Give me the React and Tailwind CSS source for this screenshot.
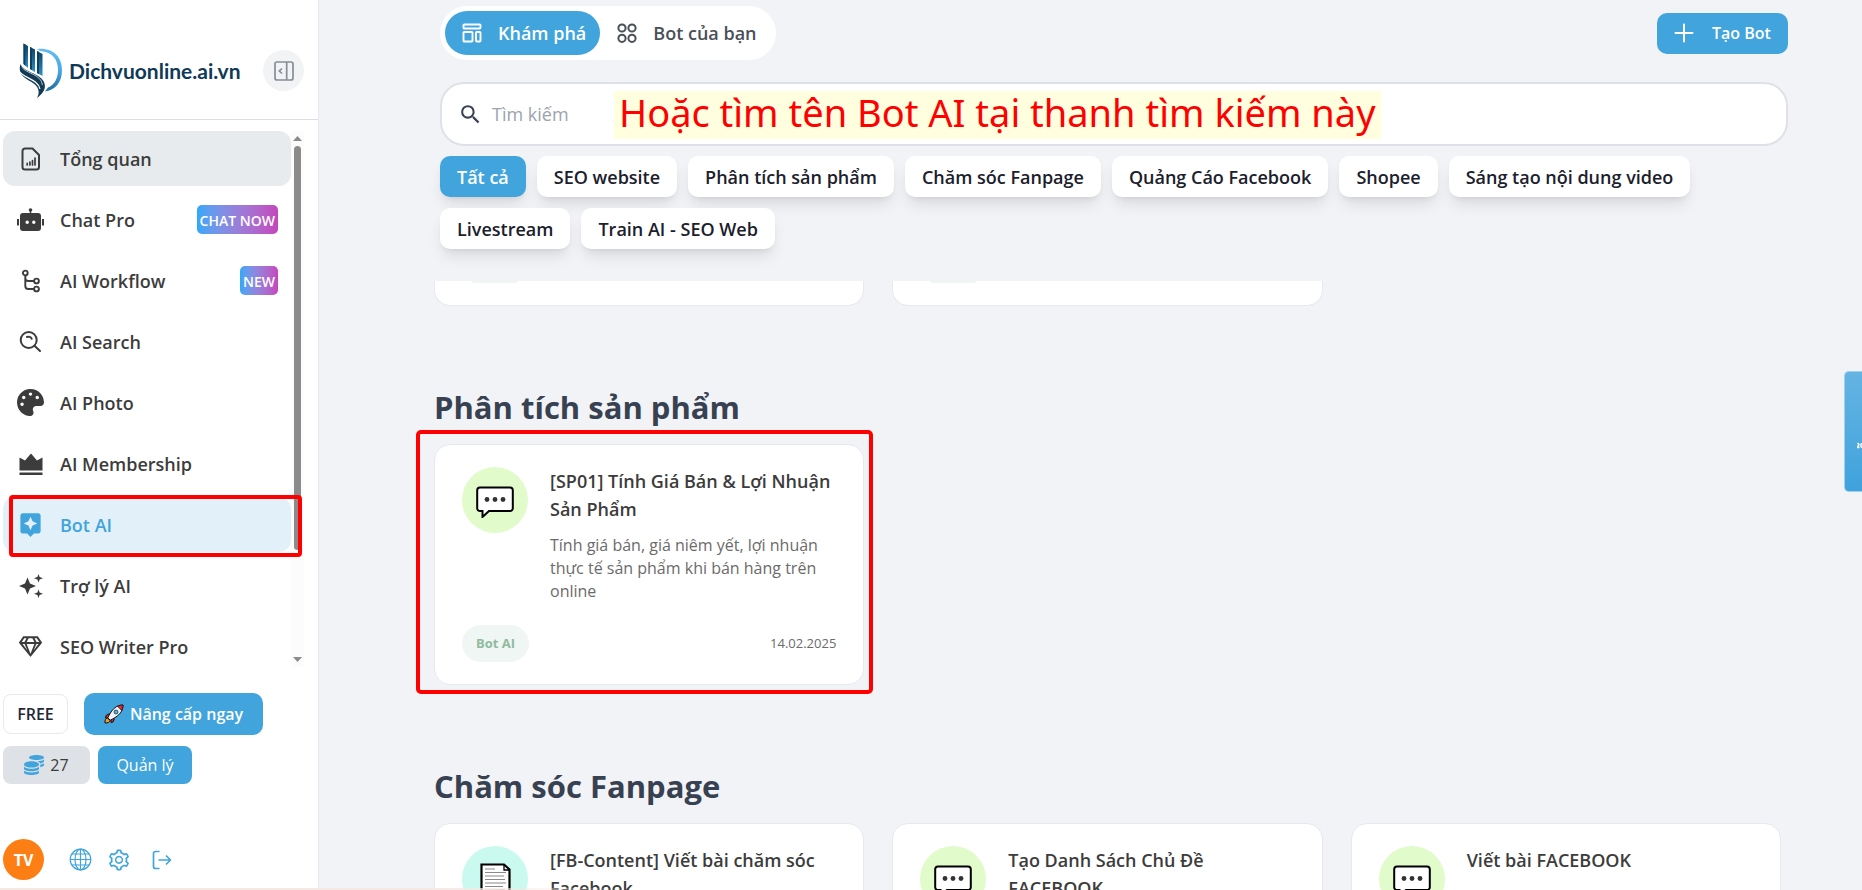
import React from "react";
import { FaPalette, FaRegGem, FaCoins } from "react-icons/fa";
import { MdAssistant, MdSearch } from "react-icons/md";
import { AiOutlineSetting } from "react-icons/ai";

function LogoMark() {
  return (
    <svg width="46" height="58" viewBox="0 0 46 58" aria-hidden="true">
      <defs>
        <linearGradient id="bar" x1="0" y1="0" x2="0" y2="1">
          <stop offset="0" stopColor="#0d4263" />
          <stop offset="1" stopColor="#2f8fc9" />
        </linearGradient>
        <linearGradient id="ring" x1="0" y1="0" x2="0" y2="1">
          <stop offset="0" stopColor="#62bdf2" />
          <stop offset="0.5" stopColor="#4aa9e6" />
          <stop offset="1" stopColor="#1d6d9e" />
        </linearGradient>
      </defs>
      <path d="M19 7C34 5 44 14 44 28S36 48 27 49.500L30 45.500C36 43 40 37 40 28C40 18 35 10 22 9Z" fill="url(#ring)" />
      <path d="M5.500 22V1.500L10 4V26Z" fill="url(#bar)" />
      <path d="M5.500 1.500L7.500 2.600V24L5.500 22Z" fill="#0d4263" />
      <path d="M12 5L17 7.500V30L12 27Z" fill="url(#bar)" />
      <path d="M12 5L14 6V28L12 27Z" fill="#0d4263" />
      <path d="M19 9L24.500 12V34L19 31Z" fill="url(#bar)" />
      <path d="M19 9L21 10V32L19 31Z" fill="#0d4263" />
      <path d="M2.500 22C5 30 22 31 26 40C29 47 24 52 19 56C22 50 21 45 15 41C8 37-1 33 2.500 22Z" fill="#123a55" />
      <path d="M1 29C5 36 20 37 22 47" fill="none" stroke="#ffffff" strokeWidth="1.200" />
      <path d="M3.500 25C9 32 23 32 24.500 43" fill="none" stroke="#d7e4ec" strokeWidth="0.800" />
    </svg>
  );
}

function ReportIcon() {
  return (
    <svg width="20" height="24" viewBox="0 0 20 24" fill="none" stroke="currentColor" strokeWidth="2" strokeLinecap="round" aria-hidden="true">
      <path d="M4 1.500H11.500L18 8V20A2.500 2.500 0 0 1 15.500 22.500H4A2.500 2.500 0 0 1 1.500 20V4A2.500 2.500 0 0 1 4 1.500Z" />
      <path d="M6.200 18V16.300M8.900 18V15M11.500 18V13.500M14 18V11" strokeWidth="1.700" />
    </svg>
  );
}

function RobotIcon() {
  return (
    <svg width="27" height="24" viewBox="0 0 27 24" fill="currentColor" aria-hidden="true">
      <circle cx="13.500" cy="2" r="1.800" />
      <path d="M12.800 2h1.400v4h-1.400z" />
      <path fillRule="evenodd" d="M6 5h15a3 3 0 0 1 3 3v12a3 3 0 0 1-3 3H6a3 3 0 0 1-3-3V8a3 3 0 0 1 3-3Zm4.200 7.600a1.700 1.700 0 1 0 0 3.400 1.700 1.700 0 0 0 0-3.400Zm6.600 0a1.700 1.700 0 1 0 0 3.400 1.700 1.700 0 0 0 0-3.400Z" />
      <path d="M0 11h2v6.500H0zM25 11h2v6.500h-2z" />
    </svg>
  );
}

function WorkflowIcon() {
  return (
    <svg width="20" height="24" viewBox="0 0 20 24" fill="none" stroke="currentColor" strokeWidth="1.900" aria-hidden="true">
      <circle cx="4.300" cy="4" r="2.400" />
      <circle cx="15.500" cy="12" r="2.400" />
      <circle cx="15.500" cy="20" r="2.400" />
      <path d="M4.300 6.400V17A3 3 0 0 0 7.300 20H13.100M4.300 9A3 3 0 0 0 7.300 12H13.100" />
    </svg>
  );
}

function SearchNavIcon() {
  return (
    <svg width="24" height="24" viewBox="0 0 24 24" fill="none" stroke="currentColor" strokeWidth="2" strokeLinecap="round" aria-hidden="true">
      <circle cx="9.700" cy="10" r="8" />
      <path d="M15.500 15.800L21 21M8 7C10 6.100 12 7.100 12.700 8.800" />
    </svg>
  );
}

function CrownIcon() {
  return (
    <svg width="24" height="24" viewBox="0 0 24 24" fill="currentColor" aria-hidden="true">
      <path d="M0.500 5.500L6 8.500L12 1.500L18 8.500L23.500 5.500V18.500H0.500ZM0.500 20.500H23.500V23H0.500Z" />
    </svg>
  );
}

function SparkleIcon() {
  return (
    <svg width="24" height="24" viewBox="0 0 24 24" fill="currentColor" aria-hidden="true">
      <path d="M8.500 3.500L11 9.500L17 12L11 14.500L8.500 20.500L6 14.500L0 12L6 9.500Z" />
      <path d="M19.500 0L20.600 3.100L24 4.300L20.600 5.500L19.500 8.600L18.400 5.500L15 4.300L18.400 3.100Z" />
      <path d="M19.500 15.400L20.600 18.500L24 19.700L20.600 20.900L19.500 24L18.400 20.900L15 19.700L18.400 18.500Z" />
    </svg>
  );
}

function CollapseIcon() {
  return (
    <svg width="20" height="20" viewBox="0 0 20 20" fill="none" stroke="currentColor" strokeWidth="1.700" aria-hidden="true">
      <rect x="1" y="1" width="18" height="18" rx="2" />
      <path d="M12.700 1V19M8 7.500L5.300 10L8 12.500" />
    </svg>
  );
}

function RocketIcon() {
  return (
    <svg width="20" height="20" viewBox="0 0 20 20" aria-hidden="true">
      <path d="M5.500 9.500L2 11.500L1.500 14L5.500 13.500M10.500 14.500L9 18L7 18.500L7 14.500" fill="#e9252f" stroke="#111" strokeWidth="1" />
      <path d="M1 19C0.800 16 1.500 14.500 3.500 14L6 16.500C5.500 18.500 4 19 1 19Z" fill="#ff9a1f" stroke="#111" strokeWidth="1" />
      <path d="M19 1C13 1 8.500 4.500 5 11.500L3.800 13.800L6.200 16.200L8.500 15C15.500 11.500 19 7 19 1Z" fill="#eef4f8" stroke="#111" strokeWidth="1" />
      <path d="M19 1C17 1 15 1.500 13.500 2.300L17.700 6.500C18.500 5 19 3 19 1Z" fill="#e9252f" stroke="#111" strokeWidth="0.700" />
      <circle cx="12" cy="8" r="2" fill="#47b3ec" stroke="#222" strokeWidth="0.700" />
    </svg>
  );
}

function GlobeIcon() {
  return (
    <svg width="23" height="23" viewBox="0 0 23 23" fill="none" stroke="currentColor" strokeWidth="1.200" aria-hidden="true">
      <circle cx="11.500" cy="11.500" r="10.300" />
      <ellipse cx="11.500" cy="11.500" rx="5.500" ry="10.300" />
      <path d="M11.500 1.200V21.800M1.200 11.500H21.800M2.800 6H20.200M2.800 17H20.200" />
    </svg>
  );
}

function LogoutIcon() {
  return (
    <svg width="20" height="20" viewBox="0 0 20 20" fill="none" stroke="currentColor" strokeWidth="1.700" strokeLinejoin="round" aria-hidden="true">
      <path d="M7.500 1.500H3.500A2 2 0 0 0 1.500 3.500V16.500A2 2 0 0 0 3.500 18.500H7.500M6.500 10H18.500M14 5.500L18.500 10L14 14.500" />
    </svg>
  );
}

function ExploreIcon() {
  return (
    <svg width="20" height="20" viewBox="0 0 20 20" fill="none" stroke="currentColor" strokeWidth="1.900" aria-hidden="true">
      <rect x="1.500" y="1.500" width="17" height="4" rx="0.800" />
      <rect x="1.500" y="9" width="9" height="9.500" rx="0.800" />
      <rect x="14" y="9" width="4.500" height="9.500" rx="0.800" />
    </svg>
  );
}

function CirclesIcon() {
  return (
    <svg width="20" height="20" viewBox="0 0 20 20" fill="none" stroke="currentColor" strokeWidth="2" aria-hidden="true">
      <circle cx="5" cy="5" r="3.600" />
      <circle cx="15" cy="5" r="3.600" />
      <circle cx="5" cy="15.300" r="3.600" />
      <circle cx="15" cy="15.300" r="3.600" />
    </svg>
  );
}

function PlusIcon() {
  return (
    <svg width="20" height="20" viewBox="0 0 20 20" fill="none" stroke="currentColor" strokeWidth="2" strokeLinecap="round" aria-hidden="true">
      <path d="M10 1.500V18.500M1.500 10H18.500" />
    </svg>
  );
}

function BubbleIcon() {
  return (
    <svg width="38" height="36" viewBox="0 -3 38 36" aria-hidden="true">
      <path d="M4 2.500H34A2.800 2.800 0 0 1 36.800 5.300V23.200A2.800 2.800 0 0 1 34 26H13L6.500 32V26H4A2.800 2.800 0 0 1 1.200 23.200V5.300A2.800 2.800 0 0 1 4 2.500Z" fill="#fff" stroke="#000" strokeWidth="2" />
      <circle cx="11" cy="14.500" r="2.400" fill="#333" />
      <circle cx="19" cy="14.500" r="2.400" fill="#333" />
      <circle cx="27" cy="14.500" r="2.400" fill="#333" />
    </svg>
  );
}

function PageIcon() {
  return (
    <svg width="31" height="36" viewBox="0 0 31 36" aria-hidden="true">
      <path d="M1.500 3.500H24L29.500 8.500V35H1.500Z" fill="#fff" stroke="#000" strokeWidth="2.200" />
      <path d="M24 3.500V9H29.500" fill="none" stroke="#000" strokeWidth="1.300" />
      <path d="M5 8H15M5 11.500H26M5 15H24M5 18.500H25M5 22H26M5 25.500H23M5 29H25" stroke="#8a8a8a" strokeWidth="1.200" />
    </svg>
  );
}

const NAV = [
  { label: "Tổng quan", icon: <ReportIcon />, hovered: true },
  { label: "Chat Pro", icon: <RobotIcon />, badge: "CHAT NOW" },
  { label: "AI Workflow", icon: <WorkflowIcon />, badge: "NEW" },
  { label: "AI Search", icon: <SearchNavIcon /> },
  { label: "AI Photo", icon: <FaPalette size={27} /> },
  { label: "AI Membership", icon: <CrownIcon /> },
  { label: "Bot AI", icon: <MdAssistant size={27} />, active: true },
  { label: "Trợ lý AI", icon: <SparkleIcon /> },
  { label: "SEO Writer Pro", icon: <FaRegGem size={23} /> },
];

const CATEGORIES = [
  "Tất cả",
  "SEO website",
  "Phân tích sản phẩm",
  "Chăm sóc Fanpage",
  "Quảng Cáo Facebook",
  "Shopee",
  "Sáng tạo nội dung video",
  "Livestream",
  "Train AI - SEO Web",
];

function NavItem({ item }) {
  const tone = item.active
    ? "bg-[#e2f0fa] text-[#41a4dd]"
    : item.hovered
      ? "bg-[#e8ebee] text-[#3c3c3c]"
      : "text-[#3c3c3c]";
  return (
    <li className="relative">
      <a href="#" className={`flex h-[55px] items-center gap-4 rounded-xl pr-[13px] pl-[14px] text-[18px] font-semibold ${tone}`}>
        <span className="flex w-[27px] shrink-0 justify-center">{item.icon}</span>
        <span className="grow pt-px whitespace-nowrap">{item.label}</span>
        {item.badge && (
          <span className="flex h-[29px] items-center rounded-[5px] bg-linear-to-r from-[#2da8f8] to-[#c445bd] px-[3px] pt-px text-[14px] font-semibold whitespace-nowrap text-white">
            {item.badge}
          </span>
        )}
      </a>
      {item.active && (
        <span className="pointer-events-none absolute -top-[2px] -right-[11px] bottom-[-5px] left-[6px] z-10 rounded-[4px] border-4 border-[#ff0000]" />
      )}
    </li>
  );
}

function Sidebar() {
  return (
    <aside className="flex w-[319px] shrink-0 flex-col border-r border-[#e5e9f0] bg-white">
      <div className="flex h-[120px] items-center border-b border-[#dcdee1] pt-[22px] pr-[14px] pl-[18px]">
        <a href="#" className="flex grow items-center gap-[5px] font-['Lato',sans-serif] text-[21px] font-bold whitespace-nowrap text-[#0f3a57]">
          <LogoMark />
          Dichvuonline.ai.vn
        </a>
        <button type="button" aria-label="Thu gọn" className="flex size-[41px] shrink-0 items-center justify-center rounded-full bg-[#f1f3f5] text-[#868e96]">
          <CollapseIcon />
        </button>
      </div>
      <nav className="mt-[11px] mr-[14px] ml-[3px] flex h-[536px] shrink-0">
        <ul className="flex grow flex-col gap-[6px]">
          {NAV.map((item) => (
            <NavItem key={item.label} item={item} />
          ))}
        </ul>
        <div className="flex w-[13px] flex-col items-center bg-[#fcfcfc] py-[5px]" aria-hidden="true">
          <svg width="9" height="5" viewBox="0 0 9 5" fill="#8b8b8b"><path d="M4.500 0L9 5H0Z" /></svg>
          <div className="mt-[5px] h-[404px] w-[7px] rounded-full bg-[#8b8b8b]" />
          <svg className="mt-auto" width="9" height="5" viewBox="0 0 9 5" fill="#8b8b8b"><path d="M4.500 5L9 0H0Z" /></svg>
        </div>
      </nav>
      <div className="mt-[26px] ml-[3px] flex items-center gap-4">
        <span className="flex h-10 w-[65px] items-center justify-center rounded-lg border border-[#e5e9f0] text-[16px] font-semibold text-[#1f2937]">FREE</span>
        <button type="button" className="flex h-[42px] w-[179px] items-center justify-center gap-[6px] rounded-[10px] bg-[#41a4dd] text-[16px] font-semibold whitespace-nowrap text-white">
          <RocketIcon />
          Nâng cấp ngay
        </button>
      </div>
      <div className="mt-[11px] ml-[3px] flex gap-2">
        <span className="flex h-[38px] w-[87px] items-center justify-center gap-[6px] rounded-lg bg-[#dee2e6] text-[16px] text-[#3c3c3c]">
          <FaCoins size={20} className="text-[#41a4dd]" />
          27
        </span>
        <button type="button" className="h-[38px] w-[94px] rounded-lg bg-[#41a4dd] text-[16px] text-white">Quản lý</button>
      </div>
      <div className="mt-auto mb-[10px] ml-[3px] flex items-center text-[#41a4dd]">
        <span className="flex size-[41px] items-center justify-center rounded-full bg-[#fd7e14] text-[16px] font-bold text-white">TV</span>
        <button type="button" aria-label="Ngôn ngữ" className="ml-[25px]"><GlobeIcon /></button>
        <button type="button" aria-label="Cài đặt" className="ml-[15px]"><AiOutlineSetting size={24} /></button>
        <button type="button" aria-label="Đăng xuất" className="ml-[21px]"><LogoutIcon /></button>
      </div>
    </aside>
  );
}

function BotCard({ title, text, date, page }) {
  return (
    <article className="flex h-[241px] flex-col rounded-[16px] border border-[#e5e9f0] bg-white px-[27px] pt-[22px] pb-[22px]">
      <div className="flex grow gap-[22px]">
        <div className={`flex size-[66px] shrink-0 items-center justify-center rounded-full ${page ? "bg-[#c9f9ef]" : "bg-[#e1fbcb]"}`}>
          {page ? <PageIcon /> : <BubbleIcon />}
        </div>
        <div>
          <h3 className="text-[18px] leading-[28px] font-semibold text-[#3c3c3c]">{title}</h3>
          <p className="mt-[11px] text-[16px] leading-[23px] text-[#6b6b6b]">{text}</p>
        </div>
      </div>
      {date && (
        <div className="flex items-center justify-between">
          <span className="flex h-[37px] items-center rounded-full bg-[#eff6f3] px-[14px] text-[13px] font-bold text-[#8fbb9d]">Bot AI</span>
          <time className="text-[13px] text-[#6b6b6b]">{date}</time>
        </div>
      )}
    </article>
  );
}

function ClippedCard() {
  return (
    <div className="h-[25px] rounded-b-[16px] border-x border-b border-[#e5e9f0] bg-white pl-[37px]">
      <div className="h-[2px] w-[46px] rounded-b-full bg-[#eff6f3]" />
    </div>
  );
}

export default function App() {
  return (
    <div className="relative flex h-screen overflow-hidden bg-[#f2f3f6] font-['Open_Sans','Noto_Sans',sans-serif]">
      <Sidebar />
      <main className="flex min-w-0 grow flex-col">
        <header className="flex flex-col pt-[6px] pr-[74px] pl-[121px]">
          <div className="flex items-center justify-between">
            <div className="flex items-center rounded-full bg-white p-[5px] text-[18px] font-semibold whitespace-nowrap">
              <button type="button" className="flex h-11 items-center gap-4 rounded-full bg-[#41a4dd] pr-[14px] pl-[17px] text-white">
                <ExploreIcon />
                Khám phá
              </button>
              <button type="button" className="flex h-11 items-center gap-4 pr-[14px] pl-[17px] text-[#495057]">
                <CirclesIcon />
                Bot của bạn
              </button>
            </div>
            <button type="button" className="flex h-[41px] w-[131px] items-center justify-center gap-[18px] rounded-[10px] bg-[#41a4dd] text-[16px] font-semibold whitespace-nowrap text-white">
              <PlusIcon />
              Tạo Bot
            </button>
          </div>
          <div className="relative mt-[22px] flex h-16 items-center gap-[9px] rounded-[24px] border-2 border-[#dee2e8] bg-white pl-4">
            <MdSearch size={25} className="text-[#374151]" />
            <input type="search" aria-label="Tìm kiếm" placeholder="Tìm kiếm" className="h-full min-w-0 grow bg-transparent pr-6 text-[18px] outline-none placeholder:text-[#9ca3af]" />
            <p className="pointer-events-none absolute top-[7px] left-[172px] flex h-12 items-center bg-[#ffffdf] px-[5px] pb-[6px] font-['Noto_Sans',sans-serif] text-[38px] leading-[42px] whitespace-nowrap text-[#ff0000]">
              Hoặc tìm tên Bot AI tại thanh tìm kiếm này
            </p>
          </div>
          <div className="mt-[10px] flex flex-wrap gap-[11px]">
            {CATEGORIES.map((name, i) => (
              <button
                key={name}
                type="button"
                className={`h-[41px] rounded-[10px] px-[17px] pt-px text-[18px] font-semibold whitespace-nowrap shadow-lg ${i === 0 ? "bg-[#41a4dd] text-white" : "bg-white text-[#1a202c]"}`}
              >
                {name}
              </button>
            ))}
          </div>
        </header>
        <div className="mt-8 min-h-0 grow overflow-hidden pr-[81px] pl-[115px]">
          <div className="grid grid-cols-3 gap-7">
            <ClippedCard />
            <ClippedCard />
          </div>
          <section className="mt-[77px]">
            <h2 className="text-[31px] leading-[48px] font-bold text-[#374151]">Phân tích sản phẩm</h2>
            <div className="mt-[13px] grid grid-cols-3 gap-7">
              <div className="relative">
                <BotCard title="[SP01] Tính Giá Bán & Lợi Nhuận Sản Phẩm" text="Tính giá bán, giá niêm yết, lợi nhuận thực tế sản phẩm khi bán hàng trên online" date="14.02.2025" />
                <span className="pointer-events-none absolute -top-[14px] -right-[9px] -bottom-[9px] -left-[18px] rounded-[5px] border-4 border-[#ff0000]" />
              </div>
            </div>
          </section>
          <section className="mt-[77px]">
            <h2 className="text-[31px] leading-[48px] font-bold text-[#374151]">Chăm sóc Fanpage</h2>
            <div className="mt-[13px] grid grid-cols-3 gap-7">
              <BotCard page title="[FB-Content] Viết bài chăm sóc Facebook" />
              <BotCard title="Tạo Danh Sách Chủ Đề FACEBOOK" />
              <BotCard title="Viết bài FACEBOOK" />
            </div>
          </section>
        </div>
      </main>
      <button type="button" aria-label="Hỗ trợ" className="absolute top-[371px] right-0 flex h-[121px] w-[18px] items-center justify-end rounded-l-[5px] border border-r-0 border-[#9fd0ee] bg-linear-to-b from-[#64b4e3] to-[#3fa2dc]">
        <svg width="5" height="7" viewBox="0 0 5 7" fill="none" stroke="#fff" strokeWidth="1.500" className="mt-[28px]" aria-hidden="true">
          <path d="M0.500 1L2 2.500L0.500 5.500H2.500M5 1.500C3.500 2 3.500 5 5 5.500" />
        </svg>
      </button>
      <div className="pointer-events-none absolute bottom-0 left-0 h-[2px] w-1/3 bg-linear-to-r from-[#f5e9e4] from-70% to-transparent" />
    </div>
  );
}
